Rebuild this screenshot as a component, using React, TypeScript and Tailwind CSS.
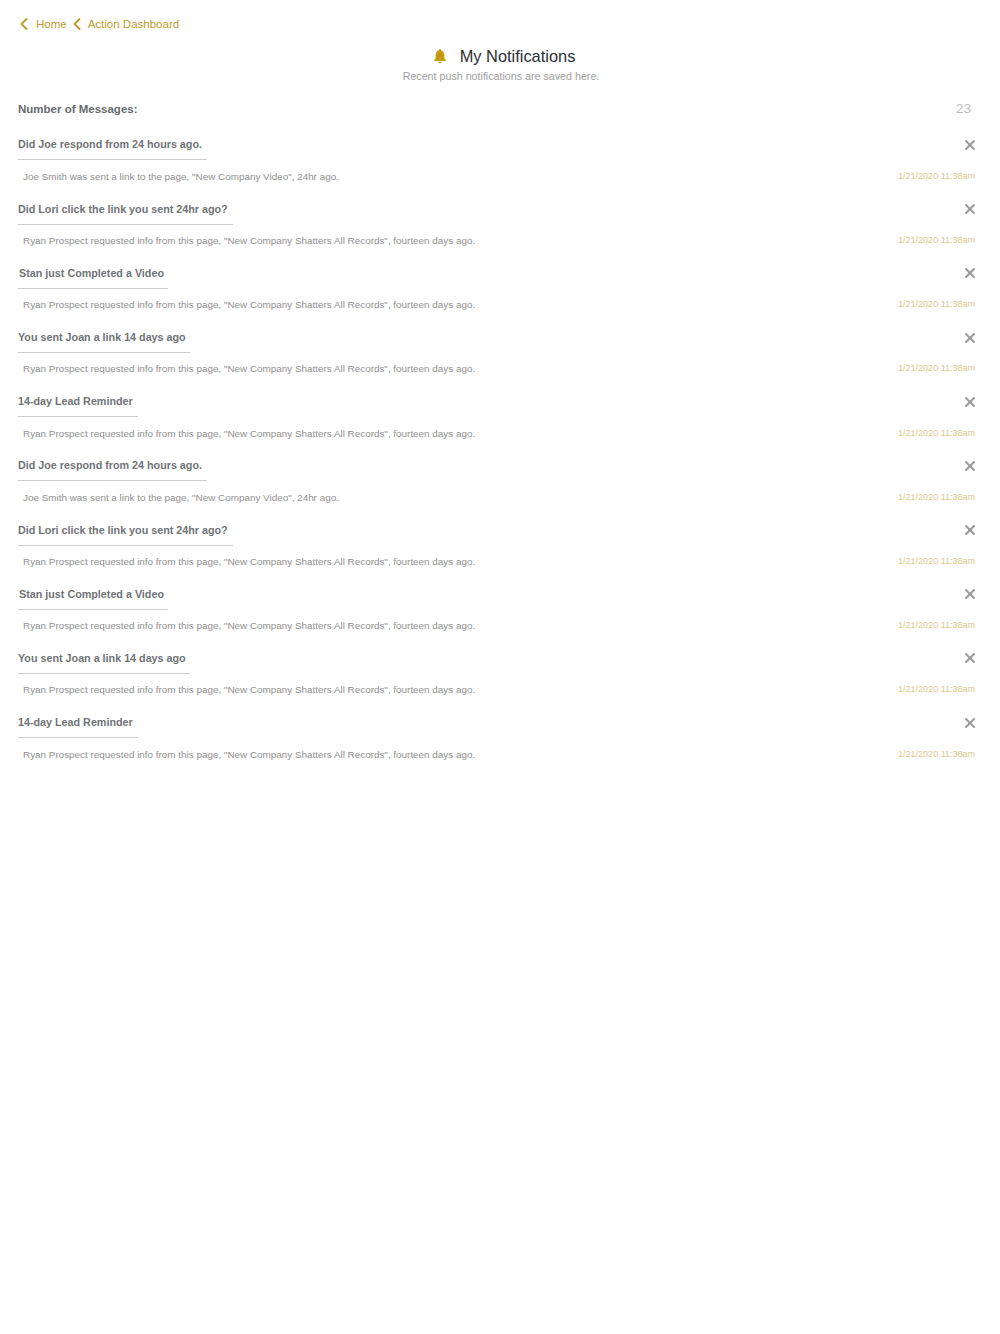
import React from 'react';
import { ChevronLeft, X } from 'lucide-react';

const joeBody = 'Joe Smith was sent a link to the page, "New Company Video", 24hr ago.';
const ryanBody = 'Ryan Prospect requested info from this page, "New Company Shatters All Records", fourteen days ago.';

const firstSet = [
  { title: 'Did Joe respond from 24 hours ago.', body: joeBody, rule: 'w-[189px]' },
  { title: 'Did Lori click the link you sent 24hr ago?', body: ryanBody, rule: 'w-[215px]' },
  { title: 'Stan just Completed a Video', body: ryanBody, rule: 'w-[150px]', inset: true },
  { title: 'You sent Joan a link 14 days ago', body: ryanBody, rule: 'w-[172px]' },
  { title: '14-day Lead Reminder', body: ryanBody, rule: 'w-[120px]' },
];

const notifications = [...firstSet, ...firstSet];

const App = () => {
  return (
    <div className="min-h-[1334px] bg-white pl-[18px] pr-[25px] font-['Liberation_Sans',Arial,sans-serif]">
      <nav className="flex h-[47px] items-center pt-[2px] text-[11.5px] text-[#bf9b30]">
        <ChevronLeft size={20} strokeWidth={2.25} className="-ml-[4px] -mt-[2px]" />
        <span className="ml-[2px]">Home</span>
        <ChevronLeft size={20} strokeWidth={2.25} className="-mt-[2px]" />
        <span className="ml-[1px]">Action Dashboard</span>
      </nav>

      <header className="flex flex-col items-center pl-[9px]">
        <div className="ml-[5px] flex h-[18px] items-center">
          <svg viewBox="0 0 24 24" className="h-[16px] w-[16px] fill-[#c49a0c]">
            <path d="M12 1.5a1.7 1.7 0 0 0-1.7 1.7v.7C7.2 4.7 5.5 7.4 5.5 10.5v5L3.2 18v1.5h17.6V18l-2.3-2.5v-5c0-3.1-1.7-5.8-4.8-6.6v-.7A1.7 1.7 0 0 0 12 1.5zM9.6 20.5a2.4 2.4 0 0 0 4.8 0z" />
          </svg>
          <h1 className="ml-[12px] text-[16.4px] leading-[18px] text-[#2b2f33]">My Notifications</h1>
        </div>
        <p className="mt-[5px] text-[10.7px] leading-[13px] text-[#a0a0a0]">Recent push notifications are saved here.</p>
      </header>

      <div className="mt-[19px] flex h-4 items-center justify-between">
        <span className="text-[11.5px] font-bold text-[#666a6d]">Number of Messages:</span>
        <span className="mb-[1px] mr-[4px] text-[13.5px] text-[#bcbcbc]">23</span>
      </div>

      <ul className="mt-[16.4px]">
        {notifications.map((item, index) => (
          <li key={index} className="h-[64.2px]">
            <div className="flex h-[25px] items-start justify-between">
              <span className={`text-[10.75px] leading-[21px] font-bold text-[#707376] ${item.inset ? 'pl-[1px]' : ''}`}>{item.title}</span>
              <X size={16} strokeWidth={3} className="-mr-[3px] mt-[2.6px] text-[#999999]" />
            </div>
            <div className={`h-[1px] bg-[#cccccc] ${item.rule}`} />
            <div className="mt-[9.5px] flex items-center justify-between pl-[5px]">
              <span className="text-[9.88px] leading-[13px] text-[#8f8f8f]">{item.body}</span>
              <span className="text-[9px] leading-[13px] text-[#dcc88c]">1/21/2020 11:38am</span>
            </div>
          </li>
        ))}
      </ul>
    </div>
  );
};

export default App;
